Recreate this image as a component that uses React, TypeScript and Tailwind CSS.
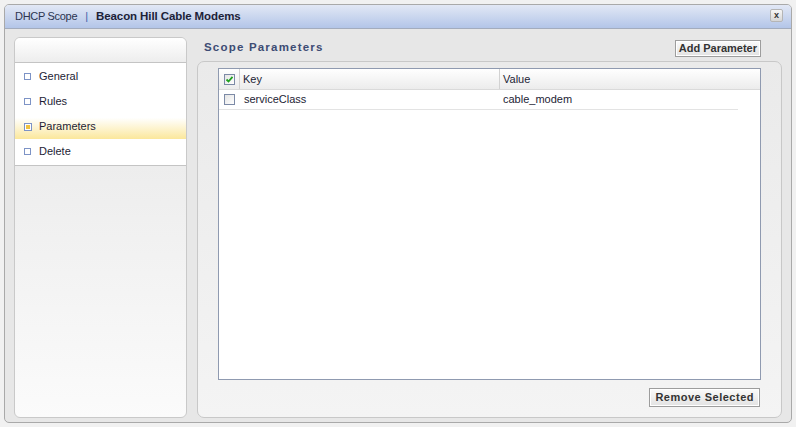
import React from "react";

const font = { fontFamily: '"Liberation Sans", Arial, sans-serif' };

function Bullet({ active }: { active?: boolean }) {
  return active ? (
    <span className="w-[8px] h-[8px] border border-[#7d93c6] bg-white flex items-center justify-center">
      <span className="w-[4px] h-[4px] bg-[#efc23f]" />
    </span>
  ) : (
    <span className="w-[7px] h-[7px] border border-[#7d93c6] bg-white" />
  );
}

function CheckBox({ checked }: { checked?: boolean }) {
  return (
    <span className="w-[11px] h-[11px] border border-[#7c8aa6] bg-gradient-to-br from-[#e4e4e4] to-white flex items-center justify-center">
      {checked && (
        <svg width="9" height="9" viewBox="0 0 9 9">
          <path d="M1.5 4.5 L3.5 6.5 L7.5 1.8" stroke="#21a121" strokeWidth="1.8" fill="none" />
        </svg>
      )}
    </span>
  );
}

function Btn({ children, tight }: { children: React.ReactNode; tight?: boolean }) {
  return (
    <button
      className={`border border-[#9d9d9d] bg-gradient-to-b from-[#fbfbfb] to-[#e2e2e2] shadow-[inset_0_0_0_1px_#ffffff] text-[11px] font-bold text-[#333] leading-none ${
        tight ? "px-[3px] tracking-[0px]" : "px-[5px] tracking-[0.5px]"
      }`}
      style={font}
    >
      {children}
    </button>
  );
}

export default function App() {
  const items = ["General", "Rules", "Parameters", "Delete"];
  return (
    <div className="w-[796px] h-[427px] bg-[#f1f1f1] pt-[4px] pl-[4px]" style={font}>
      <div className="w-[788px] h-[419px] rounded-[5px] border border-[#a9a9a9] bg-[#e7e7e7] flex flex-col overflow-hidden">
        {/* title bar */}
        <div className="h-[24px] shrink-0 bg-gradient-to-b from-[#e2e8f5] to-[#b3c5e8] border-b border-[#a3acbd] flex items-center pl-[10px] pr-[8px] text-[11px]">
          <span className="text-[#2c3550] tracking-[-0.3px]">DHCP Scope</span>
          <span className="text-[#3f5fa8] mx-[8px]">|</span>
          <span className="font-bold text-[#1c2238] text-[11.5px] tracking-[-0.1px]">Beacon Hill Cable Modems</span>
          <span className="ml-auto w-[13px] h-[13px] mb-[3px] rounded-[2px] border border-[#b5b5b5] bg-gradient-to-b from-[#f6f6f6] to-[#d6d6d6] flex items-center justify-center text-[9px] font-bold text-[#333] leading-none">
            x
          </span>
        </div>
        {/* body */}
        <div className="flex-1 flex pl-[9px] pr-[9px] pt-[8px] pb-[4px] gap-[10px]">
          {/* left panel */}
          <div className="w-[173px] rounded-[6px] border border-[#c9c9c9] overflow-hidden flex flex-col bg-gradient-to-b from-[#e6e6e6] to-[#fbfbfb]">
            <div className="h-[25px] shrink-0 bg-gradient-to-b from-white to-[#ededed] border-b border-[#c4c4c4]" />
            <div className="bg-white border-b border-[#c4c4c4] pt-[1px] pb-[1px]">
              {items.map((it, i) => (
                <div
                  key={it}
                  className={`h-[25px] flex items-center pl-[8px] gap-[7px] text-[11px] text-[#1d1d35] ${
                    i === 2 ? "bg-gradient-to-b from-white from-[15%] to-[#fbe79a]" : ""
                  }`}
                >
                  <span className="w-[9px] flex justify-center">
                    <Bullet active={i === 2} />
                  </span>
                  <span>{it}</span>
                </div>
              ))}
            </div>
            <div className="flex-1" />
          </div>
          {/* right column */}
          <div className="flex-1 flex flex-col">
            <div className="h-[24px] shrink-0 flex items-center pl-[7px] pr-[21px]">
              <span className="text-[11.5px] font-bold text-[#3d4c74] tracking-[1.2px] mb-[2px]">
                Scope Parameters
              </span>
              <span className="ml-auto h-[17px] flex mb-[2px]">
                <Btn tight>Add Parameter</Btn>
              </span>
            </div>
            <div className="flex-1 rounded-[7px] border border-[#c8c8c8] bg-gradient-to-b from-[#eaeaea] to-[#f4f4f4] pt-[6px] px-[20px] pb-[9px] flex flex-col">
              <div className="h-[312px] border border-[#8f9ab0] bg-white flex flex-col">
                <div className="h-[21px] shrink-0 flex bg-gradient-to-b from-white to-[#ececec] border-b border-[#dadada] text-[11px] text-[#1d1d35]">
                  <div className="w-[21px] border-r border-[#d2d2d2] flex items-center justify-center">
                    <CheckBox checked />
                  </div>
                  <div className="w-[260px] border-r border-[#d2d2d2] flex items-center pl-[3px]">Key</div>
                  <div className="flex-1 flex items-center pl-[3px]">Value</div>
                </div>
                <div className="h-[20px] flex text-[11px] text-[#1d1d35] border-b border-[#e3e3e3] w-[519px]">
                  <div className="w-[21px] flex items-center justify-center">
                    <CheckBox />
                  </div>
                  <div className="w-[260px] flex items-center pl-[4px]">serviceClass</div>
                  <div className="flex-1 flex items-center pl-[3px]">cable_modem</div>
                </div>
              </div>
              <div className="flex justify-end mt-[8px] pr-[1px]">
                <span className="h-[19px] flex">
                  <Btn>Remove Selected</Btn>
                </span>
              </div>
            </div>
          </div>
        </div>
      </div>
    </div>
  );
}
